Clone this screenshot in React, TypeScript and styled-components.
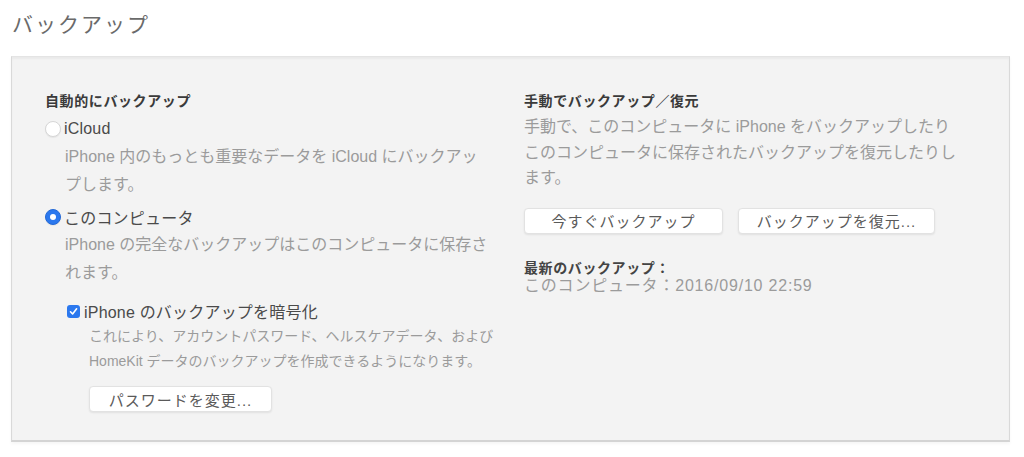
import React from "react";
import styled, { createGlobalStyle } from "styled-components";

const Global = createGlobalStyle`
  html, body { margin: 0; padding: 0; background: #ffffff; }
  body {
    font-family: "Liberation Sans", "Noto Sans CJK JP", sans-serif;
    -webkit-font-smoothing: antialiased;
  }
`;

const Page = styled.div`
  width: 1024px;
  height: 457px;
  box-sizing: border-box;
  padding: 13px 14px 0 11px;
  display: flex;
  flex-direction: column;
`;

const Title = styled.h1`
  margin: 0 0 0 1px;
  font-size: 21px;
  line-height: 24px;
  font-weight: normal;
  letter-spacing: 2px;
  color: #6a6a6a;
`;

const Panel = styled.section`
  margin-top: 19px;
  height: 386px;
  box-sizing: border-box;
  background: #f3f3f3;
  border: 1px solid #d9d9d9;
  border-top-color: #e4e4e4;
  border-bottom: 2px solid #d4d4d4;
  box-shadow: inset 0 2px 2px rgba(0, 0, 0, 0.04), 0 2px 3px rgba(0, 0, 0, 0.04);
  padding: 36px 0 0 33px;
  display: grid;
  grid-template-columns: 479px 1fr;
`;

const Column = styled.div`
  display: flex;
  flex-direction: column;
  align-items: flex-start;
`;

const Heading = styled.div`
  font-size: 14px;
  line-height: 16px;
  font-weight: bold;
  letter-spacing: 0.6px;
  color: #3a3a3a;
  white-space: nowrap;
`;

const OptionRow = styled.div<{ $mt: number; $indent?: number }>`
  display: flex;
  align-items: center;
  gap: 3px;
  height: 22px;
  margin-top: ${(p) => p.$mt}px;
  margin-left: ${(p) => p.$indent ?? 0}px;
  font-size: 16px;
  letter-spacing: 0.2px;
  color: #4a4a4a;
  white-space: nowrap;
`;

const Radio = styled.span<{ $on?: boolean }>`
  width: 16px;
  height: 16px;
  box-sizing: border-box;
  border-radius: 50%;
  background: ${(p) => (p.$on ? "#2b78ee" : "#ffffff")};
  border: 1px solid ${(p) => (p.$on ? "#2469d6" : "#d6d6d6")};
  box-shadow: 0 1px 1px rgba(0, 0, 0, 0.06);
  display: flex;
  align-items: center;
  justify-content: center;
  &::after {
    content: "";
    display: ${(p) => (p.$on ? "block" : "none")};
    width: 6px;
    height: 6px;
    border-radius: 50%;
    background: #ffffff;
  }
`;

const Check = styled.span`
  width: 13px;
  height: 13px;
  border-radius: 3px;
  background: #2b78ee;
  display: flex;
  align-items: center;
  justify-content: center;
  margin-right: 1px;
`;

const Desc = styled.div<{ $mt: number; $lh: number; $indent?: number; $size?: number }>`
  margin-top: ${(p) => p.$mt}px;
  margin-left: ${(p) => p.$indent ?? 0}px;
  font-size: ${(p) => p.$size ?? 16}px;
  line-height: ${(p) => p.$lh}px;
  color: #9b9b9b;
  white-space: nowrap;
`;

const Line = styled.div``;

const Button = styled.button<{ $w: number }>`
  width: ${(p) => p.$w}px;
  height: 26px;
  box-sizing: border-box;
  background: #ffffff;
  border: 1px solid #e2e2e2;
  border-radius: 4px;
  box-shadow: 0 1px 2px rgba(0, 0, 0, 0.08);
  font-family: inherit;
  font-size: 15px;
  letter-spacing: 1px;
  color: #5a5a5a;
  padding: 0;
  cursor: default;
`;

const ButtonRow = styled.div<{ $mt: number; $indent?: number }>`
  display: flex;
  gap: 15px;
  margin-top: ${(p) => p.$mt}px;
  margin-left: ${(p) => p.$indent ?? 0}px;
`;

const Latest = styled.div`
  margin-top: 25px;
  font-size: 16px;
  line-height: 17px;
  letter-spacing: 0.8px;
  color: #9b9b9b;
  white-space: nowrap;
`;

const Strong = styled.span`
  color: #444444;
  font-weight: bold;
  font-size: 14px;
  letter-spacing: 0.6px;
`;

export default function App() {
  return (
    <>
      <Global />
      <Page>
        <Title>バックアップ</Title>
        <Panel>
          <Column>
            <Heading>自動的にバックアップ</Heading>
            <OptionRow $mt={9}>
              <Radio />
              iCloud
            </OptionRow>
            <Desc $mt={3} $lh={28} $indent={20}>
              <Line>iPhone 内のもっとも重要なデータを iCloud にバックアッ</Line>
              <Line>プします。</Line>
            </Desc>
            <OptionRow $mt={7}>
              <Radio $on />
              このコンピュータ
            </OptionRow>
            <Desc $mt={3} $lh={28} $indent={20}>
              <Line>iPhone の完全なバックアップはこのコンピュータに保存さ</Line>
              <Line>れます。</Line>
            </Desc>
            <OptionRow $mt={13} $indent={22}>
              <Check>
                <svg width="9" height="9" viewBox="0 0 9 9">
                  <path d="M1.5 4.8 L3.6 7 L7.6 1.8" fill="none" stroke="#fff" strokeWidth="1.6" strokeLinecap="round" strokeLinejoin="round" />
                </svg>
              </Check>
              iPhone のバックアップを暗号化
            </OptionRow>
            <Desc $mt={2} $lh={25} $indent={44} $size={14}>
              <Line>これにより、アカウントパスワード、ヘルスケアデータ、および</Line>
              <Line>HomeKit データのバックアップを作成できるようになります。</Line>
            </Desc>
            <ButtonRow $mt={12} $indent={44}>
              <Button $w={183}>パスワードを変更...</Button>
            </ButtonRow>
          </Column>
          <Column>
            <Heading>手動でバックアップ／復元</Heading>
            <Desc $mt={5} $lh={25.5}>
              <Line>手動で、このコンピュータに iPhone をバックアップしたり</Line>
              <Line>このコンピュータに保存されたバックアップを復元したりし</Line>
              <Line>ます。</Line>
            </Desc>
            <ButtonRow $mt={17}>
              <Button $w={199}>今すぐバックアップ</Button>
              <Button $w={197}>バックアップを復元...</Button>
            </ButtonRow>
            <Latest>
              <Line>
                <Strong>最新のバックアップ：</Strong>
              </Line>
              <Line>このコンピュータ：2016/09/10 22:59</Line>
            </Latest>
          </Column>
        </Panel>
      </Page>
    </>
  );
}
